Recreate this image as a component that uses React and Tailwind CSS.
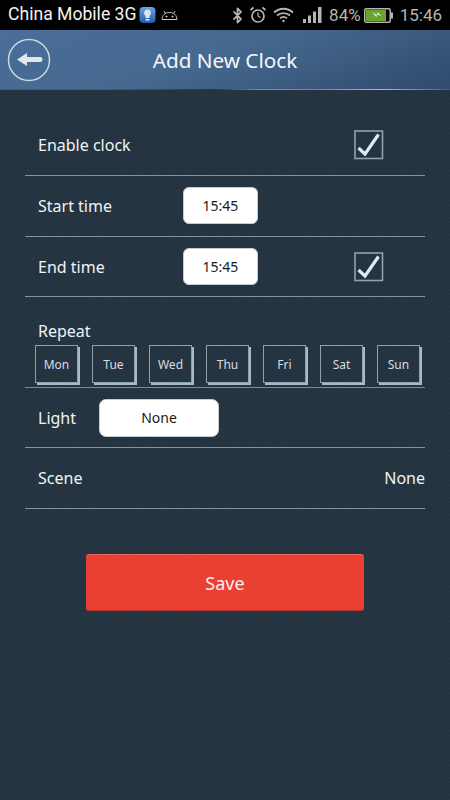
import { Bluetooth } from "lucide-react";

const days = ["Mon", "Tue", "Wed", "Thu", "Fri", "Sat", "Sun"];

const StatusBar = () => (
  <div className="h-[30px] bg-black flex items-center justify-between pl-2 pr-[8px] font-['Roboto',sans-serif] text-[17px] leading-none">
    <div className="flex items-center text-[#f2f2f2]">
      <span className="whitespace-nowrap text-[17.6px]">China Mobile 3G</span>
      <svg width="17" height="16" viewBox="0 0 17 16" className="ml-[3px]">
        <defs>
          <linearGradient id="lamp" x1="0" y1="0" x2="0" y2="1">
            <stop offset="0" stopColor="#6aa6e0" />
            <stop offset="1" stopColor="#1f5ca8" />
          </linearGradient>
        </defs>
        <rect x="0.5" y="0" width="16" height="16" rx="4" fill="url(#lamp)" />
        <path d="M8.500 2.500a3.500 3.500 0 0 0-2 6.400V11h4V8.900a3.500 3.500 0 0 0-2-6.400z" fill="#d5e6f5" />
        <rect x="6.700" y="12" width="3.600" height="1.600" fill="#d5e6f5" />
      </svg>
      <svg width="17" height="12" viewBox="0 0 17 12" className="ml-[5px]" fill="none" stroke="#c8c8c8" strokeWidth="1">
        <path d="M1 10.500h15c0-4-3-7-7.500-7S1 6.500 1 10.500z" />
        <path d="M4.500 4.500 3 2M12.500 4.500 14 2" />
        <circle cx="5.500" cy="7.500" r="0.6" fill="#c8c8c8" />
        <circle cx="11.500" cy="7.500" r="0.6" fill="#c8c8c8" />
      </svg>
    </div>
    <div className="flex items-center text-[#b5b5b5]">
      <Bluetooth size={17} strokeWidth={2.4} />
      <svg width="18" height="18" viewBox="0 0 18 18" className="ml-[3px]" fill="none" stroke="#b5b5b5" strokeWidth="1.700">
        <circle cx="9" cy="10" r="6" />
        <path d="M9 6.500V10l2.500 1.500" strokeWidth="1.300" />
        <path d="M1.500 4 4.500 1.500M16.500 4l-3-2.500" />
      </svg>
      <svg width="21" height="16" viewBox="0 0 21 16" className="ml-[6px]" fill="none" stroke="#b5b5b5" strokeWidth="1.800">
        <path d="M1 5.500c5.500-5 13.500-5 19 0" />
        <path d="M4 8.500c3.700-3.300 9.300-3.300 13 0" />
        <path d="M7 11.300c2-1.700 5-1.700 7 0" />
        <circle cx="10.500" cy="14" r="1.200" fill="#b5b5b5" stroke="none" />
      </svg>
      <svg width="19" height="16" viewBox="0 0 19 16" className="ml-[9px]" fill="#b5b5b5">
        <rect x="0" y="12" width="3" height="4" />
        <rect x="5" y="8.500" width="3" height="7.500" />
        <rect x="10" y="4.500" width="3" height="11.500" />
        <rect x="15" y="0" width="3.500" height="16" />
      </svg>
      <span className="ml-[7px]">84%</span>
      <svg width="29" height="15" viewBox="0 0 29 15" className="ml-[3px]">
        <rect x="0.750" y="0.750" width="25.500" height="13.500" rx="1.500" fill="#000" stroke="#b5b5b5" strokeWidth="1.500" />
        <rect x="2" y="2" width="20" height="11" fill="#6ba32c" />
        <rect x="27" y="4.500" width="2" height="6" fill="#b5b5b5" />
        <path d="M8 4l5 3 .5-3 4 4-4.500-1.500-.5 3z" fill="#e6e6e6" />
      </svg>
      <span className="ml-[7px]">15:46</span>
    </div>
  </div>
);

const BackButton = () => (
  <svg width="44" height="44" viewBox="0 0 44 44" fill="none">
    <circle cx="22" cy="22" r="20.500" stroke="#cfd6de" strokeWidth="1.500" />
    <path d="M10 21.500l10-6.500v4h13a2.500 2.500 0 0 1 0 5H20v4z" fill="#e4e6e8" />
  </svg>
);

const Header = () => (
  <div className="h-[60px] relative flex items-center justify-center bg-[linear-gradient(160deg,#4a6d9b_0%,#46698f_45%,#2f4a6c_100%)]">
    <div className="absolute left-[7px] top-[8px]">
      <BackButton />
    </div>
    <span className="mt-[2px] text-[20.7px] text-[#f4f7fa]">Add New Clock</span>
    <div className="absolute left-0 right-0 bottom-0 h-[1px] bg-[linear-gradient(to_right,#c8282a,#b01e98_25%,#2a20b0_48%,#20b8c8_58%,#30b058_70%,#d8c820_85%,#c8282a)]" />
  </div>
);

const Checkbox = () => (
  <svg width="30" height="30" viewBox="0 0 30 30" fill="none">
    <rect x="1" y="1" width="27.500" height="27.500" stroke="#8fa3b3" strokeWidth="1.600" />
    <path d="M4.500 18 11 24 24.500 4.500" stroke="#e0e8f0" strokeWidth="3.200" />
  </svg>
);

const TimeButton = ({ className = "" }) => (
  <div className={`w-[75px] h-[37px] flex items-center justify-center bg-white rounded-[6px] text-[14px] text-[#1a1a1a] border border-[#c4ccd2] ${className}`}>
    15:45
  </div>
);

const Row = ({ children, className }) => (
  <div className={`flex items-center border-b border-[#7f97a3] text-[#f1f4f6] text-[16px] ${className}`}>
    {children}
  </div>
);

const App = () => (
  <div className="w-[450px] h-[800px] overflow-hidden bg-[repeating-linear-gradient(45deg,#27363f_0px,#27363f_1px,#243341_1px,#243341_3px)] font-['Noto_Sans',sans-serif]">
    <StatusBar />
    <Header />
    <div className="mx-[25px] pt-[25px]">
      <Row className="h-[61px] pl-[13px] pr-[41px] justify-between">
        <span>Enable clock</span>
        <Checkbox />
      </Row>
      <Row className="h-[61px] pl-[13px]">
        <span className="w-[145px]">Start time</span>
        <TimeButton className="mb-[2px]" />
      </Row>
      <Row className="h-[60px] pl-[13px]">
        <span className="w-[145px]">End time</span>
        <TimeButton />
        <div className="ml-[96px]">
          <Checkbox />
        </div>
      </Row>
      <div className="h-[91px] border-b border-[#7f8a90] pt-[23px]">
        <div className="pl-[13px] text-[16px] leading-[22px] text-[#f1f4f6]">Repeat</div>
        <div className="flex gap-[14px] pl-[10px] mt-[3px]">
          {days.map((d) => (
            <div
              key={d}
              className="w-[43px] h-[38px] pt-[2px] flex items-center justify-center text-[12px] text-[#d5dde3] border border-[#8ea0ad] shadow-[2px_2px_0_0_#a9bac6]"
            >
              {d}
            </div>
          ))}
        </div>
      </div>
      <Row className="h-[60px] pl-[13px]">
        <span className="w-[61px]">Light</span>
        <div className="w-[120px] h-[38px] flex items-center justify-center bg-white rounded-[7px] text-[14px] text-[#1a1a1a] border border-[#c4ccd2]">
          None
        </div>
      </Row>
      <Row className="h-[61px] pl-[13px] justify-between">
        <span>Scene</span>
        <span>None</span>
      </Row>
    </div>
    <div className="mt-[45px] mx-[86px] h-[57px] flex items-center justify-center bg-[#ea4034] rounded-[3px] border-t border-t-[#f0665b] border-b border-b-[#b5352b] text-[#fbeeec] text-[18px]">
      <span className="mt-[2px]">Save</span>
    </div>
  </div>
);

export default App;
